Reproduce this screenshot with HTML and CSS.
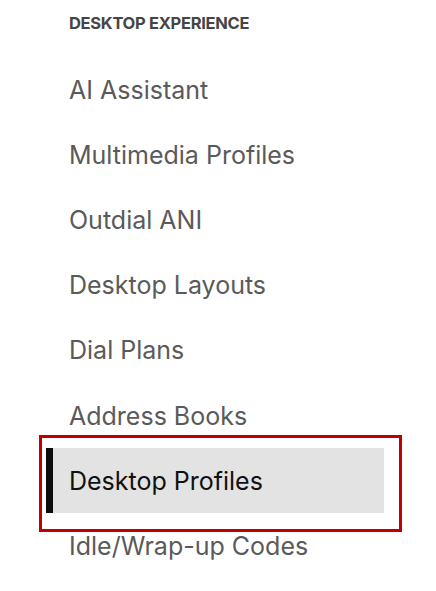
FILE: index.html
```html
<!DOCTYPE html>
<html>
<head>
<meta charset="utf-8">
<link rel="stylesheet" href="styles.css">
</head>
<body>
<nav class="nav">
  <div class="heading">DESKTOP EXPERIENCE</div>
  <ul class="list">
    <li class="item">AI Assistant</li>
    <li class="item">Multimedia Profiles</li>
    <li class="item">Outdial ANI</li>
    <li class="item">Desktop Layouts</li>
    <li class="item">Dial Plans</li>
    <li class="item">Address Books</li>
    <li class="item selected">Desktop Profiles</li>
    <li class="item">Idle/Wrap-up Codes</li>
  </ul>
</nav>
</body>
</html>
```
FILE: styles.css
```css
html, body {
  margin: 0;
  padding: 0;
  background: #ffffff;
}
body {
  font-family: Inter, "Noto Sans", sans-serif;
  width: 436px;
  height: 591px;
  overflow: hidden;
}
.nav {
  padding-left: 46px;
}
.heading {
  padding-left: 23px;
  height: 57px;
  box-sizing: border-box;
  padding-top: 13px;
  font-size: 16.5px;
  line-height: 20px;
  font-weight: 700;
  letter-spacing: -0.3px;
  color: #454545;
}
.list {
  list-style: none;
  margin: 0;
  padding: 0;
  width: 338px;
}
.item {
  height: 65.2px;
  display: flex;
  align-items: center;
  padding-left: 23px;
  font-size: 25px;
  color: #5a5a5a;
  box-sizing: border-box;
}
.selected {
  position: relative;
  background: #e3e3e3;
  color: #111111;
  border-left: 7px solid #0d0d0d;
  padding-left: 16px;
}
.selected::after {
  content: "";
  position: absolute;
  left: -14px;
  right: -18px;
  top: -13px;
  bottom: -19px;
  border: 3px solid #c00000;
}
```
